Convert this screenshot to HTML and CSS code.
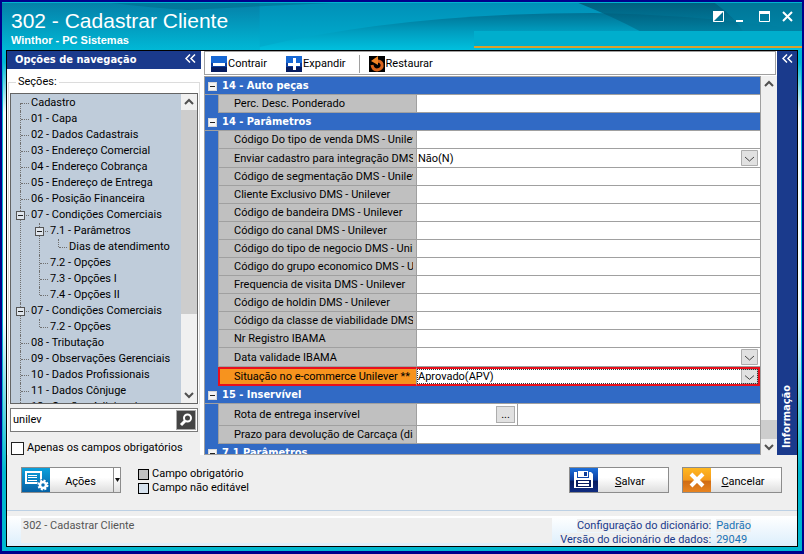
FILE: index.html
```html
<!DOCTYPE html>
<html lang="pt-BR">
<head>
<meta charset="utf-8">
<title>302 - Cadastrar Cliente</title>
<link rel="stylesheet" href="styles.css">
</head>
<body>
<div class="window">
  <header class="titlebar">
    <svg class="waves" viewBox="0 0 798 47" preserveAspectRatio="none" aria-hidden="true">
      <defs>
        <linearGradient id="sky" x1="0" y1="0" x2="0" y2="1"><stop offset="0" stop-color="#0580a8"/><stop offset="1" stop-color="#00b8d6"/></linearGradient>
        <linearGradient id="mid" x1="0" y1="0" x2="0" y2="1"><stop offset="0" stop-color="#0090b8"/><stop offset="1" stop-color="#00b0d0"/></linearGradient>
        <linearGradient id="wave" x1="0" y1="0" x2="0" y2="1"><stop offset="0" stop-color="#007294"/><stop offset=".5" stop-color="#009dbf"/><stop offset="1" stop-color="#00c0de"/></linearGradient>
        <linearGradient id="top" x1="0" y1="0" x2="0" y2="1"><stop offset="0" stop-color="#00506c"/><stop offset="1" stop-color="#0086a8"/></linearGradient>
      </defs>
      <rect width="798" height="47" fill="url(#sky)"/>
      <path d="M257 0H798V47H257Z" fill="url(#mid)"/>
      <path d="M110 0Q150 5 185 7Q260 3 330 0Z" fill="#00708f" opacity=".6"/>
      <path d="M257 44Q400 10 590 10Q700 12 798 27V47H257Z" fill="url(#wave)"/>
      <path d="M575 0Q610 14 636 28L798 40V0Z" fill="url(#top)" opacity=".75"/>
      <path d="M711 0Q732 15 740 30H798V0Z" fill="#0086a8" opacity=".6"/>
    </svg>
    <div class="titles">
      <h1>302 - Cadastrar Cliente</h1>
      <p>Winthor - PC Sistemas</p>
    </div>
    <div class="title-side">
      <div class="controls">
        <button aria-label="Alternar tema"><svg width="11" height="11" viewBox="0 0 11 11"><path d="M.5 .5h10v10H.5Z" fill="none" stroke="#fff"/><path d="M0 0h11L0 11Z" fill="#fff"/></svg></button>
        <button aria-label="Minimizar"><svg width="11" height="11" viewBox="0 0 11 11"><path d="M0 9h7v2H0Z" fill="#fff"/></svg></button>
        <button aria-label="Maximizar"><svg width="11" height="11" viewBox="0 0 11 11"><path d="M.5 .5h10v10H.5Z" fill="none" stroke="#fff"/><path d="M0 0h11v3H0Z" fill="#fff"/></svg></button>
        <button aria-label="Fechar"><svg width="11" height="11" viewBox="0 0 11 11"><path d="M1 1l9 9M10 1l-9 9" stroke="#fff" stroke-width="2"/></svg></button>
      </div>
      <div class="banner"></div>
    </div>
  </header>

  <main class="client">
    <div class="workspace">
      <aside class="nav">
        <div class="nav-head"><h2>Opções de navegação</h2>
          <button class="chev" aria-label="Recolher navegação"><svg width="11" height="9" viewBox="0 0 11 9"><path d="M5 .5l-4 4 4 4M10 .5l-4 4 4 4" fill="none" stroke="#fff" stroke-width="1.5"/></svg></button>
        </div>
        <fieldset class="sections">
          <legend>Seções:</legend>
          <div class="treebox">
            <ul class="tree">
              <li>Cadastro</li>
              <li>01 - Capa</li>
              <li>02 - Dados Cadastrais</li>
              <li>03 - Endereço Comercial</li>
              <li>04 - Endereço Cobrança</li>
              <li>05 - Endereço de Entrega</li>
              <li>06 - Posição Financeira</li>
              <li><button class="fold" aria-label="Recolher"></button>07 - Condições Comerciais
                <ul>
                  <li><button class="fold" aria-label="Recolher"></button>7.1 - Parâmetros
                    <ul><li>Dias de atendimento</li></ul>
                  </li>
                  <li>7.2 - Opções</li>
                  <li>7.3 - Opções I</li>
                  <li>7.4 - Opções II</li>
                </ul>
              </li>
              <li><button class="fold" aria-label="Recolher"></button>07 - Condições Comerciais
                <ul><li>7.2 - Opções</li></ul>
              </li>
              <li>08 - Tributação</li>
              <li>09 - Observações Gerenciais</li>
              <li>10 - Dados Profissionais</li>
              <li>11 - Dados Cônjuge</li>
              <li>12 - Opções Adicionais</li>
            </ul>
            <div class="scroll tree-scroll">
              <svg width="16" height="16" viewBox="0 0 16 16"><path d="M4 10l4-4 4 4" fill="none" stroke="#505050" stroke-width="2"/></svg>
              <span class="thumb"></span>
              <span class="rest"></span>
              <svg width="16" height="16" viewBox="0 0 16 16"><path d="M4 6l4 4 4-4" fill="none" stroke="#505050" stroke-width="2"/></svg>
            </div>
          </div>
        </fieldset>
        <div class="nav-foot">
          <div class="search">
            <input type="text" value="unilev" aria-label="Pesquisar campo">
            <button aria-label="Pesquisar"><svg width="16" height="16" viewBox="0 0 16 16"><circle cx="9.500" cy="6" r="3.500" fill="none" stroke="#fff" stroke-width="2"/><path d="M7 9l-4 4" stroke="#fff" stroke-width="3"/></svg></button>
          </div>
          <label class="check"><input type="checkbox">Apenas os campos obrigatórios</label>
        </div>
      </aside>

      <section class="content">
        <div class="toolbar">
          <button><svg width="16" height="16" viewBox="0 0 16 16"><rect width="16" height="16" rx="1" fill="#0c3d9c"/><rect width="16" height="7" rx="1" fill="#1768d4"/><rect y="11" width="16" height="5" fill="#061c60"/><path d="M2 7h12v3H2Z" fill="#fff"/></svg>Contrair</button>
          <button><svg width="16" height="16" viewBox="0 0 16 16"><rect width="16" height="16" rx="1" fill="#0c3d9c"/><rect width="16" height="7" rx="1" fill="#1768d4"/><rect y="11" width="16" height="5" fill="#061c60"/><path d="M2 7h12v3H2ZM7 2h3v12H7Z" fill="#fff"/></svg>Expandir</button>
          <span class="sep"></span>
          <button><svg width="16" height="16" viewBox="0 0 16 16"><rect width="16" height="16" fill="#000"/><path d="M3 9Q4 14 8 14Q14 13 13 8Q12 5 8 5" fill="none" stroke="#d8641c" stroke-width="3"/><path d="M9 0v9L2 5Z" fill="#f08424"/></svg>Restaurar</button>
        </div>
        <div class="gridwrap">
          <div class="gridclip">
            <table class="props">
              <colgroup><col class="c-gutter"><col class="c-label"><col></colgroup>
              <tbody>
                <tr class="cat"><th colspan="3"><button class="fold" aria-label="Recolher"></button>14 - Auto peças</th></tr>
                <tr><td class="gut"></td><th><label for="f1">Perc. Desc. Ponderado</label></th><td><input id="f1"></td></tr>
                <tr class="cat"><th colspan="3"><button class="fold" aria-label="Recolher"></button>14 - Parâmetros</th></tr>
                <tr><td class="gut"></td><th><label for="f2">Código Do tipo de venda DMS - Unilever</label></th><td><input id="f2"></td></tr>
                <tr class="pick"><td class="gut"></td><th><label for="f3">Enviar cadastro para integração DMS</label></th><td><select id="f3"><option>Não(N)</option></select></td></tr>
                <tr><td class="gut"></td><th><label for="f4">Código de segmentação DMS - Unilever</label></th><td><input id="f4"></td></tr>
                <tr><td class="gut"></td><th><label for="f5">Cliente Exclusivo DMS - Unilever</label></th><td><input id="f5"></td></tr>
                <tr><td class="gut"></td><th><label for="f6">Código de bandeira DMS - Unilever</label></th><td><input id="f6"></td></tr>
                <tr><td class="gut"></td><th><label for="f7">Código do canal DMS - Unilever</label></th><td><input id="f7"></td></tr>
                <tr><td class="gut"></td><th><label for="f8">Código do tipo de negocio DMS - Unilever</label></th><td><input id="f8"></td></tr>
                <tr><td class="gut"></td><th><label for="f9">Código do grupo economico DMS - Unilever</label></th><td><input id="f9"></td></tr>
                <tr><td class="gut"></td><th><label for="f10">Frequencia de visita DMS - Unilever</label></th><td><input id="f10"></td></tr>
                <tr><td class="gut"></td><th><label for="f11">Código de holdin DMS - Unilever</label></th><td><input id="f11"></td></tr>
                <tr><td class="gut"></td><th><label for="f12">Código da classe de viabilidade DMS - Unilever</label></th><td><input id="f12"></td></tr>
                <tr><td class="gut"></td><th><label for="f13">Nr Registro IBAMA</label></th><td><input id="f13"></td></tr>
                <tr class="pick"><td class="gut"></td><th><label for="f14">Data validade IBAMA</label></th><td><select id="f14"><option></option></select></td></tr>
                <tr class="pick active"><td class="gut"></td><th><label for="f15">Situação no e-commerce Unilever **</label></th><td><select id="f15"><option>Aprovado(APV)</option></select></td></tr>
                <tr class="cat"><th colspan="3"><button class="fold" aria-label="Recolher"></button>15 - Inservível</th></tr>
                <tr class="lookup"><td class="gut"></td><th><label for="f16">Rota de entrega inservível</label></th><td><div class="split"><span class="code"><input id="f16"><button aria-label="Procurar rota">...</button></span></div></td></tr>
                <tr><td class="gut"></td><th><label for="f17">Prazo para devolução de Carcaça (dias)</label></th><td><input id="f17"></td></tr>
                <tr class="cat"><th colspan="3"><button class="fold" aria-label="Recolher"></button>7.1 Parâmetros</th></tr>
              </tbody>
            </table>
          </div>
          <div class="scroll grid-scroll">
            <svg width="16" height="16" viewBox="0 0 16 16"><path d="M4 10l4-4 4 4" fill="none" stroke="#505050" stroke-width="2"/></svg>
            <span class="rest"></span>
            <span class="thumb"></span>
            <svg width="16" height="16" viewBox="0 0 16 16"><path d="M4 6l4 4 4-4" fill="none" stroke="#505050" stroke-width="2"/></svg>
          </div>
        </div>
      </section>

      <aside class="info">
        <button class="chev" aria-label="Abrir informação"><svg width="11" height="9" viewBox="0 0 11 9"><path d="M5 .5l-4 4 4 4M10 .5l-4 4 4 4" fill="none" stroke="#fff" stroke-width="1.5"/></svg></button>
        <h2>Informação</h2>
      </aside>
    </div>

    <div class="actions">
      <div class="action split-btn">
        <button class="face"><svg width="28" height="24" viewBox="0 0 28 24"><defs><linearGradient id="ba" x1="0" y1="0" x2="0" y2="1"><stop offset="0" stop-color="#0aa0dc"/><stop offset="1" stop-color="#0560a4"/></linearGradient></defs><rect width="28" height="24" fill="url(#ba)"/><path d="M4 4h15v11H4Z" fill="none" stroke="#fff" stroke-width="2"/><path d="M6 7.500h9M6 9.500h9M6 12.500h9" stroke="#fff"/><circle cx="21" cy="17" r="6" fill="#0870b4"/><circle cx="21" cy="17" r="3" fill="none" stroke="#fff" stroke-width="2.500"/><circle cx="21" cy="17" r="4.500" fill="none" stroke="#fff" stroke-width="2" stroke-dasharray="2 1.530"/></svg><span>Ações</span></button>
        <button class="drop" aria-label="Mais ações"><svg width="5" height="4" viewBox="0 0 5 4"><path d="M0 0h5L2.500 4Z" fill="#111"/></svg></button>
      </div>
      <ul class="key">
        <li><span class="sw req"></span>Campo obrigatório</li>
        <li><span class="sw ro"></span>Campo não editável</li>
      </ul>
      <div class="commit">
        <button class="action face"><svg width="28" height="24" viewBox="0 0 28 24"><defs><linearGradient id="bb" x1="0" y1="0" x2="0" y2="1"><stop offset="0" stop-color="#1c70dc"/><stop offset=".5" stop-color="#0b3c9c"/><stop offset=".55" stop-color="#071c60"/><stop offset="1" stop-color="#102c80"/></linearGradient></defs><rect width="28" height="24" fill="url(#bb)"/><path d="M8 3h10v6H8ZM4 4h3v6h12V4h2l2 2v14H4Z" fill="#fff"/><path d="M14 4h3v4h-3Z" fill="#123f98"/><path d="M6 12h15v7H6Z" fill="#071c60"/><path d="M8 13h11v2H8ZM8 16h11v2H8Z" fill="#fff"/></svg><span><u>S</u>alvar</span></button>
        <button class="action face"><svg width="28" height="24" viewBox="0 0 28 24"><defs><linearGradient id="bc" x1="0" y1="0" x2="0" y2="1"><stop offset="0" stop-color="#ffb820"/><stop offset=".5" stop-color="#f49a1c"/><stop offset=".55" stop-color="#d06c14"/><stop offset="1" stop-color="#e88420"/></linearGradient></defs><rect width="28" height="24" fill="url(#bc)"/><path d="M8 6l12 12M20 6L8 18" stroke="#fff" stroke-width="4"/></svg><span><u>C</u>ancelar</span></button>
      </div>
    </div>

    <footer class="status">
      <div class="crumb">302 - Cadastrar Cliente</div>
      <dl>
        <dt>Configuração do dicionário:</dt><dd>Padrão</dd>
        <dt>Versão do dicionário de dados:</dt><dd>29049</dd>
      </dl>
    </footer>
  </main>
</div>
</body>
</html>
```
FILE: styles.css
```css
* { box-sizing: border-box; }

body {
  margin: 0;
  height: 100vh;
  background: #00008b;
  color: #000;
  font: 11px/16px Roboto, sans-serif;
}

h1, h2, p, ul, dl, dd { margin: 0; padding: 0; font-size: inherit; }
ul { list-style: none; }
button, input, select { margin: 0; padding: 0; border: 0; font: inherit; color: inherit; background: none; border-radius: 0; }
svg { display: block; flex: none; }

.window {
  height: 100%;
  display: flex;
  flex-direction: column;
  border: 2px solid #00008b;
  border-bottom-width: 3px;
  background: linear-gradient(#00b8d6 0, #00b8d6 60px, #f4fcfe 110px, #f4fcfe 320px, #00b8d0 470px);
  box-shadow: inset 1px 0 #00b4d0, inset -1px 0 #00b4d0;
}

/* Title bar */
.titlebar {
  flex: none;
  position: relative;
  height: 48px;
  display: flex;
  justify-content: space-between;
  border-top: 1px solid #00b4d0;
  color: #fff;
  font-family: "Liberation Sans", sans-serif;
}
.waves { position: absolute; inset: 0; width: 100%; height: 100%; }
.titles { position: relative; padding: 6px 0 0 9px; }
.titles h1 { font-size: 21px; line-height: 24px; font-weight: 400; }
.titles p { font-size: 11px; line-height: 14px; font-weight: 700; }
.title-side {
  position: relative;
  width: 41%;
  display: flex;
  flex-direction: column;
  justify-content: space-between;
  padding-bottom: 2px;
}
.controls { display: flex; justify-content: flex-end; gap: 12px; padding: 8px 9px 0 0; }
.banner { height: 17px; background: #00aecd; border-bottom: 2px solid #d9a02c; }

/* Client area */
.client {
  flex: 1;
  min-height: 0;
  display: flex;
  flex-direction: column;
  margin: 0 4px 4px;
  border: 1px solid #000;
  background: #efefef;
}
.workspace { flex: 1; min-height: 0; display: flex; background: #fff; }

.nav { width: 194px; flex: none; display: flex; flex-direction: column; margin-right: 3px; }
.nav-head, .info { background: #1a3a8c; color: #fff; }
.nav-head { flex: none; height: 18px; display: flex; justify-content: space-between; padding: 0 5px 0 8px; }
.nav-head h2, .info h2, .cat th { font: 700 11px/18px "DejaVu Sans Condensed", "DejaVu Sans", sans-serif; }
.chev { display: grid; place-items: center; height: 14px; }

.sections {
  flex: 1;
  min-height: 0;
  min-width: 0;
  display: flex;
  margin: 5px 1px 0;
  padding: 3px 1px 0;
  border: 1px solid #dcdcdc;
  border-bottom: 0;
}
.sections legend { margin-left: 6px; padding: 0 2px; }
.treebox { flex: 1; display: flex; height: 100%; overflow: hidden; border: 1px solid #646464; background: #bfccda; }
.tree { flex: 1; min-width: 0; padding-top: 1px; white-space: nowrap; }
.tree li { position: relative; padding-left: 20px; line-height: 16px; }
.tree li ul { margin-left: -1px; }
.tree li::before {
  content: "";
  position: absolute;
  left: 9px;
  top: 0;
  height: 100%;
  border-left: 1px dotted #707070;
}
.tree li::after {
  content: "";
  position: absolute;
  left: 10px;
  top: 8px;
  width: 8px;
  border-top: 1px dotted #707070;
}
.tree li li:last-child::before { height: 8px; }
.tree > li:first-child::before { top: 8px; height: 8px; }
.fold { display: grid; place-items: center; width: 9px; height: 9px; border: 1px solid #555; background: #f4f4f4; }
.fold::after { content: ""; width: 5px; height: 1px; background: #222; }
.tree .fold { position: absolute; z-index: 1; left: 5px; top: 4px; background: #dfe5ec; }

.scroll { flex: none; width: 16px; display: flex; flex-direction: column; background: #f0f0f0; }
.scroll .rest { flex: 1; }
.scroll .thumb { background: #cdcdcd; }
.tree-scroll .thumb { flex: 2.800; }
.grid-scroll .thumb { height: 19px; }

.nav-foot { flex: none; margin: 0 1px; padding: 4px 2px 0; background: #efefef; height: 51px; }
.search { display: flex; height: 24px; padding: 1px; border: 1px solid #7a7a7a; background: #fff; }
.search input { flex: 1; min-width: 0; padding-left: 1px; outline: 0; }
.search button { display: grid; place-items: center; width: 20px; height: 20px; border: 1px solid #aaa; background: #444; }
.check { display: flex; align-items: center; gap: 3px; margin: 8px 0 0 1px; white-space: nowrap; }
.check input { appearance: none; width: 13px; height: 13px; border: 1px solid #222; background: #fff; }

/* Toolbar and property grid */
.content { flex: 1; min-width: 0; display: flex; flex-direction: column; }
.toolbar { flex: none; height: 24px; display: flex; align-items: center; gap: 19px; margin: 0 1px 1px 0; padding: 1px 6px 0; border: 1px solid #a0a0a0; }
.toolbar button { display: flex; align-items: center; gap: 1px; }
.sep { width: 1px; height: 18px; margin: 0 -10px 0 -6px; background: #a0a0a0; }

.gridwrap { flex: 1; min-height: 0; display: flex; background: #f0f0f0; }
.gridclip { flex: 1; min-width: 0; overflow: hidden; border: 1px solid #a0a0a0; }
.props { width: 100%; table-layout: fixed; border-collapse: separate; border-spacing: 0; }
.c-gutter { width: 13px; }
.c-label { width: 199px; }
.props tr { height: 18px; }
.props .pick { height: 19px; }
.props .lookup { height: 22px; }
.props th, .props td { padding: 0; height: inherit; border-bottom: 1px solid #a0a0a0; background: #fff; }
.props th { overflow: hidden; padding: 1px 3px 0 15px; border-right: 1px solid #a0a0a0; border-left: 1px solid #a0a0a0; background: #c0c0c0; font-weight: 400; text-align: left; }
.props label { display: block; overflow: hidden; white-space: nowrap; }
.props .gut { border: 0; background: #316ac5; }
.props .cat th { padding: 0 0 0 3px; border-left: 0; border-right: 0; background: #316ac5; color: #fff; font-weight: 700; line-height: 17px; }
.props .cat .fold { display: inline-grid; margin-right: 5px; vertical-align: middle; border-color: #d8d8d8; }
.props input, .props select { display: block; width: 100%; height: 16px; padding: 1px 1px 0; outline: 0; }
.props select {
  appearance: none;
  height: 17px;
  background: url("data:image/svg+xml,%3Csvg xmlns='http://www.w3.org/2000/svg' width='17' height='16'%3E%3Cpath d='M.5 .5h16v15H.5Z' fill='%23e1e1e1' stroke='%23adadad'/%3E%3Cpath d='M4 7l4.500 4L13 7' fill='none' stroke='%23444'/%3E%3C/svg%3E") no-repeat right 2px center;
}
.props .active th { background: #f7931e; border: 2px solid #e8101c; border-right: 1px solid #a0a0a0; padding: 0 3px 0 14px; }
.props .active label { line-height: 15px; }
.props .active td:last-child { border: 2px solid #e8101c; border-left: 0; }
.props .active select { height: 15px; padding: 0 1px; background-position: right 0 center; background-size: 17px 15px; outline: 1px dotted #333; outline-offset: -1px; }
.split { display: flex; height: 21px; }
.code { display: flex; align-items: center; width: 101px; padding-right: 2px; border-right: 1px solid #a0a0a0; }
.code input { flex: 1; min-width: 0; }
.code button { width: 19px; height: 17px; border: 1px solid #adadad; background: #e1e1e1; line-height: 14px; }

.info { width: 20px; flex: none; display: flex; flex-direction: column; align-items: center; justify-content: space-between; padding-bottom: 7px; }
.info h2 { writing-mode: vertical-rl; transform: rotate(180deg); }

/* Actions */
.actions { flex: none; display: flex; align-items: flex-start; height: 56px; padding: 12px 15px 0 14px; border-bottom: 1px solid #bcd0e4; }
.action { width: 100px; height: 26px; border: 1px solid #8c8c8c; background: linear-gradient(#fff 40%, #dedede); }
.face { display: flex; align-items: center; }
.face span { flex: 1; text-align: center; padding-top: 3px; padding-right: 6px; }
.split-btn { display: flex; }
.split-btn .face { flex: 1; }
.split-btn .face span { padding-right: 2px; }
.drop { display: grid; place-items: center; width: 7px; border-left: 1px solid #8c8c8c; }
.key { margin-left: 17px; line-height: 14px; }
.key li { display: flex; align-items: center; gap: 3px; }
.sw { width: 11px; height: 11px; border: 1px solid #000; }
.req { background: #c0c0c0; }
.ro { background: #d6e2ee; }
.commit { display: flex; gap: 13px; margin-left: auto; }

/* Status bar */
.status { flex: none; display: flex; justify-content: space-between; height: 30px; margin-top: 5px; padding: 2px 46px 0 14px; background: linear-gradient(#fff, #dceefc); line-height: 14px; }
.crumb { width: 531px; flex: 0 1 auto; padding: 1px 0 0 2px; margin-bottom: 3px; background: #efefef; color: #555; }
.status dl { display: grid; grid-template-columns: auto auto; justify-items: start; column-gap: 5px; padding-top: 1px; line-height: 13px; row-gap: 1px; white-space: nowrap; }
.status dt { justify-self: end; background: #efefef; color: #1a3a8c; }
.status dd { color: #1874b8; background: #efefef; }
```
